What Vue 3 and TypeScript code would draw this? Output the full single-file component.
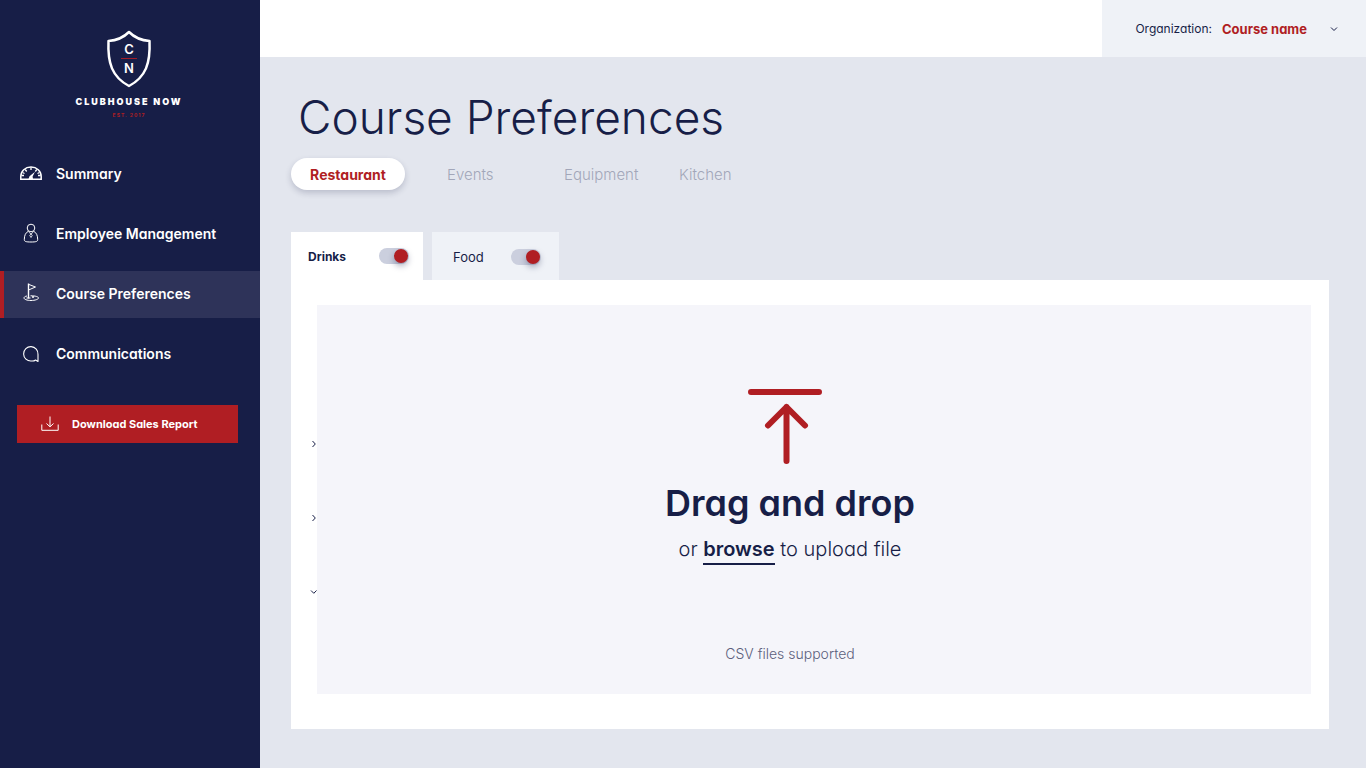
<script setup lang="ts">
import { ref } from 'vue'

type Icon = 'gauge' | 'person' | 'flag' | 'chat'

const menu: { label: string; icon: Icon }[] = [
  { label: 'Summary', icon: 'gauge' },
  { label: 'Employee Management', icon: 'person' },
  { label: 'Course Preferences', icon: 'flag' },
  { label: 'Communications', icon: 'chat' },
]
const activePage = ref('Course Preferences')

const sections = ['Restaurant', 'Events', 'Equipment', 'Kitchen']
const activeSection = ref('Restaurant')

const menus = ref([
  { id: 'drinks', label: 'Drinks', enabled: true },
  { id: 'food', label: 'Food', enabled: true },
])
const activeMenu = ref('drinks')

const organization = ref('Course name')
const groups = ref([{ open: false }, { open: false }, { open: true }])

const picker = ref<HTMLInputElement | null>(null)
const browse = () => picker.value?.click()
</script>

<template>
  <div class="page">
    <aside class="sidebar">
      <div class="brand">
        <svg class="shield" viewBox="0 0 46 58" width="46" height="58" aria-hidden="true">
          <path d="M23 2C18 7 10 10.500 2.500 11C1.500 33 6 47 23 56C40 47 44.500 33 43.500 11C36 10.500 28 7 23 2Z" fill="none" stroke="#fff" stroke-width="2.500" stroke-linejoin="round" />
          <path d="M15 28.500H31" stroke="#a01d28" stroke-width="1" />
          <text x="23" y="24" class="crest">C</text>
          <text x="23" y="43" class="crest">N</text>
        </svg>
        <div class="brand-name">CLUBHOUSE NOW</div>
        <div class="brand-est">EST. 2017</div>
      </div>

      <nav class="menu">
        <a
          v-for="item in menu"
          :key="item.label"
          href="#"
          class="menu-item"
          :class="{ active: item.label === activePage }"
          @click.prevent="activePage = item.label"
        >
          <svg class="menu-icon" viewBox="0 0 24 24" width="24" height="24" aria-hidden="true">
            <g v-if="item.icon === 'gauge'" fill="none" stroke="#fff" stroke-width="1.300">
              <path d="M1.800 17.300V14.500C1.800 9 6.200 5 12 5S22.200 9 22.200 14.500V17.300Z" stroke-width="1.500" />
              <path d="M12 5.500V8M6.200 7.500L7.700 9.500M17.800 7.500L16.300 9.500M2.500 13.500H5M21.500 13.500H19M3.500 10.500L5.500 11.500M20.500 10.500L18.500 11.500" />
              <path d="M16 9.800L10.500 14.200L9.500 17H14L13.600 14.500Z" fill="#fff" stroke="none" />
            </g>
            <g v-else-if="item.icon === 'person'" fill="none" stroke="#fff" stroke-width="1">
              <circle cx="12" cy="6" r="3.800" />
              <path d="M9.700 9.100C6.500 10.500 5.300 13.500 5.300 17.700C5.300 19.500 7 20 12 20S18.700 19.500 18.700 17.700C18.700 13.500 17.500 10.500 14.300 9.100" />
              <path d="M9.700 10L12 12L14.300 10M12 12L10.800 13.500L12 15.500L13.200 13.500Z" stroke-width=".8" />
            </g>
            <g v-else-if="item.icon === 'flag'" fill="none" stroke="#fff" stroke-width="1">
              <path d="M9.500 16.500V1.500" stroke-width="1.400" />
              <path d="M10 2.500L16.500 5L10 7.800" />
              <path d="M8 14C6 14.300 5 15 5 16C5 17.300 8 18.500 12 18.500S19.500 17.300 19.500 16C19.500 14.700 16.500 13.800 11.500 13.800" />
              <path d="M7.500 16H11.500" />
              <circle cx="14" cy="15" r=".7" />
            </g>
            <path v-else d="M19 19.500V12.500A7.200 7.200 0 1 0 12.300 19Q15 19.300 16.500 18Z" fill="none" stroke="#fff" stroke-width="1.100" stroke-linejoin="round" />
          </svg>
          <span>{{ item.label }}</span>
        </a>
      </nav>

      <button type="button" class="download">
        <svg viewBox="0 0 18 16" width="18" height="16" fill="none" stroke="#fff" aria-hidden="true">
          <path d="M9 .500V10.500M5.500 7.500L9 10.800L12.500 7.500M.800 8.500V14.300H17.200V8.500" />
        </svg>
        <span>Download Sales Report</span>
      </button>
    </aside>

    <div class="content">
      <header class="topbar">
        <div class="organization">
          <label for="organization">Organization:</label>
          <div class="select-wrap">
            <select id="organization" v-model="organization">
              <option>Course name</option>
            </select>
            <svg viewBox="0 0 8 6" width="8" height="6" fill="none" stroke="#171e47" aria-hidden="true">
              <path d="M1 1.500L4 4.500L7 1.500" />
            </svg>
          </div>
        </div>
      </header>

      <main class="main">
        <h1>Course Preferences</h1>

        <div class="sections">
          <button
            v-for="section in sections"
            :key="section"
            type="button"
            class="section"
            :class="{ active: section === activeSection }"
            @click="activeSection = section"
          >{{ section }}</button>
        </div>

        <div class="tabs">
          <div
            v-for="tab in menus"
            :key="tab.id"
            class="tab"
            :class="{ active: tab.id === activeMenu }"
            @click="activeMenu = tab.id"
          >
            <label :for="tab.id">{{ tab.label }}</label>
            <input :id="tab.id" v-model="tab.enabled" type="checkbox" class="toggle" />
          </div>
        </div>

        <section class="panel">
          <div class="groups">
            <button
              v-for="(group, i) in groups"
              :key="i"
              type="button"
              class="expander"
              :aria-label="`Group ${i + 1}`"
              :aria-expanded="group.open"
              @click="group.open = !group.open"
            >
              <svg viewBox="0 0 8 8" width="8" height="8" fill="none" stroke="#171e47" aria-hidden="true">
                <path :d="group.open ? 'M2 2.500L4.800 5.300L7.500 2.500' : 'M3.500 1L6.300 4L3.500 7'" />
              </svg>
            </button>
          </div>

          <div class="dropzone">
            <svg class="upload" viewBox="0 0 74 76" width="74" height="76" fill="none" stroke="#b01e23" stroke-width="6" stroke-linecap="round" stroke-linejoin="round" aria-hidden="true">
              <path d="M3 3H71M38.500 72V18M20 36.500L38.500 18L57 36.500" />
            </svg>
            <h2>Drag and drop</h2>
            <p class="browse-line">
              or <button type="button" class="browse" @click="browse">browse</button> to upload file
            </p>
            <p class="note">CSV files supported</p>
            <input ref="picker" type="file" accept=".csv" aria-label="CSV file" hidden />
          </div>
        </section>
      </main>
    </div>
  </div>
</template>

<style>
body {
  margin: 0;
}
</style>

<style scoped>
.page {
  --navy: #171e47;
  --red: #b01e23;
  display: flex;
  min-height: 100vh;
  background: #e3e6ee;
  color: var(--navy);
  font-family: "Century Gothic", Inter, Lato, sans-serif;
  font-feature-settings: "cv11", "ss03";
  font-size: 14px;
}
.page *,
.page {
  box-sizing: border-box;
}
button,
select {
  border: 0;
  padding: 0;
  background: none;
  color: inherit;
  font: inherit;
  font-feature-settings: inherit;
  cursor: pointer;
}

.sidebar {
  flex: 0 0 260px;
  background: var(--navy);
  color: #fff;
}
.brand {
  display: flex;
  flex-direction: column;
  align-items: center;
  height: 151px;
  padding: 30px 2px 0 0;
}
.crest {
  fill: #fff;
  font-size: 13px;
  font-weight: 600;
  text-anchor: middle;
}
.brand-name {
  margin-top: 8px;
  font-size: 9px;
  font-weight: 900;
  line-height: 12px;
  letter-spacing: 2px;
}
.brand-est {
  margin-top: 4px;
  color: var(--red);
  font-size: 5px;
  font-weight: 700;
  line-height: 6px;
  letter-spacing: 1px;
}
.menu {
  display: flex;
  flex-direction: column;
  gap: 13px;
}
.menu-item {
  display: flex;
  align-items: center;
  gap: 13px;
  height: 47px;
  padding: 0 0 2px 15px;
  border-left: 4px solid transparent;
  color: #fff;
  font-weight: 600;
  text-decoration: none;
}
.menu-item.active {
  border-left-color: var(--red);
  background: #2e3359;
}
.download {
  display: flex;
  align-items: center;
  gap: 13px;
  width: calc(100% - 39px);
  height: 38px;
  margin: 27px 22px 0 17px;
  padding-left: 24px;
  background: var(--red);
  font-size: 11px;
  font-weight: 700;
}

.content {
  display: flex;
  flex: 1;
  flex-direction: column;
  min-width: 0;
}
.topbar {
  display: flex;
  justify-content: flex-end;
  height: 57px;
  background: #fff;
}
.organization {
  display: flex;
  align-items: center;
  gap: 10px;
  padding: 0 28px 0 33px;
  background: #eff2f7;
  font-size: 12px;
}
.select-wrap {
  display: flex;
  align-items: center;
}
.select-wrap select {
  width: 116px;
  margin-right: -8px;
  appearance: none;
  color: var(--red);
  font-size: 13px;
  font-weight: 700;
}
.select-wrap svg {
  pointer-events: none;
}

.main {
  display: flex;
  flex: 1;
  flex-direction: column;
  padding: 32px 37px 39px 31px;
}
h1 {
  margin: 0 0 13px 7px;
  font-size: 46px;
  font-weight: 300;
  line-height: 56px;
}
.sections {
  display: grid;
  grid-template-columns: 156px 117px 115px auto;
  justify-content: start;
  justify-items: start;
}
.section {
  height: 32px;
  color: #a2a6b9;
  font-size: 15px;
  font-weight: 300;
}
.section.active {
  min-width: 114px;
  padding: 0 18px;
  border-radius: 16px;
  background: #fff;
  box-shadow: 0 3px 6px rgba(23, 30, 71, 0.2);
  color: var(--red);
  font-size: 14px;
  font-weight: 700;
}
.tabs {
  display: flex;
  gap: 9px;
  margin-top: 42px;
}
.tab {
  display: flex;
  align-items: center;
  justify-content: space-between;
  width: 127px;
  height: 48px;
  padding: 2px 18px 0 21px;
  background: #eff2f7;
  font-size: 13px;
}
.tab.active {
  width: 132px;
  padding: 0 14px 0 17px;
  background: #fff;
  font-size: 12px;
  font-weight: 700;
}
.toggle {
  width: 30px;
  height: 16px;
  margin: 0;
  padding: 1px;
  appearance: none;
  border-radius: 8px;
  background: #cbcfde;
  cursor: pointer;
}
.toggle::before {
  display: block;
  width: 14px;
  height: 14px;
  border-radius: 50%;
  background: var(--red);
  box-shadow: 0 3px 6px rgba(23, 30, 71, 0.35);
  content: "";
}
.toggle:checked::before {
  margin-left: auto;
}

.panel {
  display: flex;
  flex: 1;
  padding: 25px 18px 35px 0;
  background: #fff;
}
.groups {
  display: flex;
  flex: 0 0 26px;
  flex-direction: column;
  align-items: flex-end;
  gap: 50px;
  padding-top: 127px;
}
.expander {
  display: flex;
  align-items: center;
  justify-content: flex-end;
  width: 24px;
  height: 24px;
}
.dropzone {
  display: flex;
  flex: 1;
  flex-direction: column;
  align-items: center;
  padding: 84px 48px 30px 0;
  background: #f5f5fa;
}
.upload {
  margin-right: 10px;
}
h2 {
  margin: 16px 0 0;
  font-size: 36px;
  font-weight: 600;
  line-height: 44px;
}
.browse-line {
  margin: 10px 0 0;
  font-size: 20px;
  font-weight: 300;
  line-height: 26px;
}
.browse {
  border-bottom: 2px solid var(--navy);
  font-weight: 600;
  line-height: 28px;
}
.note {
  margin: auto 0 0;
  color: #5c607c;
  font-weight: 300;
  line-height: 20px;
}
</style>
